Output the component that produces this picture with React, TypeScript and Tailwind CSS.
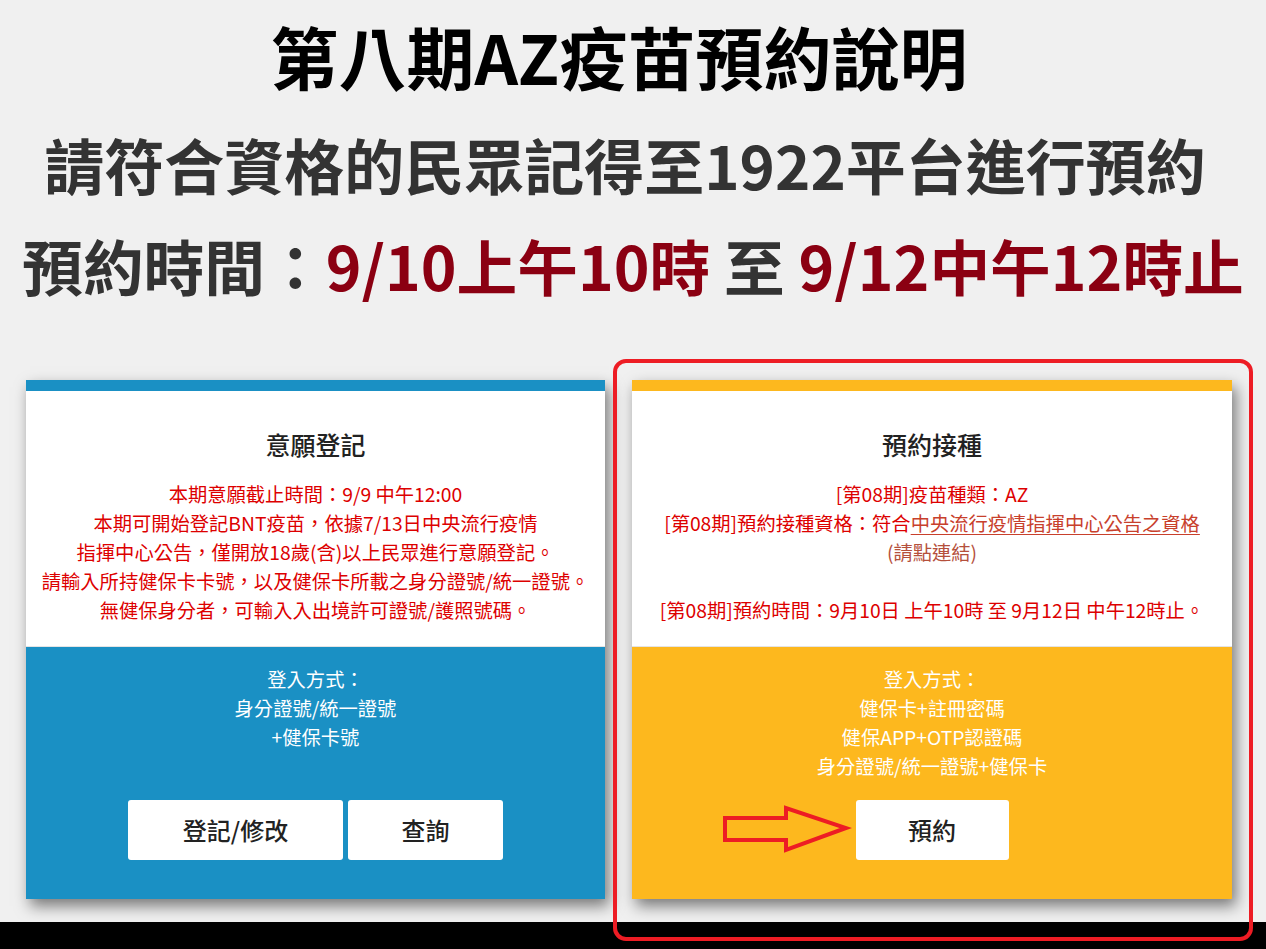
import React from 'react';

const font = "font-['Noto_Sans_CJK_TC','Noto_Sans',sans-serif]";

const RedArrow: React.FC = () => (
  <svg
    className="absolute left-[720px] top-[803px]"
    width="132"
    height="52"
    viewBox="0 0 132 52"
    fill="none"
  >
    <polygon
      points="5,15 66,15 66,5 126,25 66,47 66,37 5,37"
      stroke="#ed1c24"
      strokeWidth="4"
      strokeLinejoin="miter"
    />
  </svg>
);

const App: React.FC = () => {
  return (
    <div className={`relative h-[949px] w-[1266px] bg-[#f0f0f0] ${font} overflow-hidden`}>
      {/* headline */}
      <div className="pt-[6px] text-center whitespace-nowrap">
        <h1 className="pr-[28px] text-[68px] leading-[100px] font-bold text-black">第八期AZ疫苗預約說明</h1>
        <p className="mt-[8px] pr-[16px] text-[60px] leading-[100px] font-bold text-[#333]">
          請符合資格的民眾記得至1922平台進行預約
        </p>
        <p className="mt-[1px] text-[60.7px] leading-[100px] font-bold text-[#333]">
          預約時間：<span className="text-[#8b0012]">9/10上午10時</span> 至{' '}
          <span className="text-[#8b0012]">9/12中午12時止</span>
        </p>
      </div>

      {/* cards */}
      <div className="mt-[65px] flex gap-[27px] pl-[26px]">
        <div className="flex w-[579px] flex-col shadow-[4px_7px_14px_rgba(0,0,0,0.5)]">
          <div className="h-[11px] bg-[#1a90c4]" />
          <div className="h-[256px] border-b border-[#e4e4e4] bg-white pt-[38px] text-center">
            <h2 className="mb-[21px] text-[25px] leading-[30px] font-medium text-[#222]">意願登記</h2>
            <div className="text-[19.3px] leading-[29px] text-[#dd0000]">
              <p>本期意願截止時間：9/9 中午12:00</p>
              <p>本期可開始登記BNT疫苗，依據7/13日中央流行疫情</p>
              <p>指揮中心公告，僅開放18歲(含)以上民眾進行意願登記。</p>
              <p>請輸入所持健保卡卡號，以及健保卡所載之身分證號/統一證號。</p>
              <p>無健保身分者，可輸入入出境許可證號/護照號碼。</p>
            </div>
          </div>
          <div className="flex h-[252px] flex-col bg-[#1a90c4] pt-[18px] text-center">
            <div className="text-[19.3px] leading-[29px] text-white">
              <p>登入方式：</p>
              <p>身分證號/統一證號</p>
              <p>+健保卡號</p>
            </div>
            <div className="mt-auto mb-[39px] flex justify-center gap-[5px]">
              <button className="h-[60px] w-[215px] rounded-[3px] bg-white text-[24px] font-medium text-[#222]">
                登記/修改
              </button>
              <button className="h-[60px] w-[155px] rounded-[3px] bg-white text-[24px] font-medium text-[#222]">
                查詢
              </button>
            </div>
          </div>
        </div>

        <div className="flex w-[600px] flex-col shadow-[4px_7px_14px_rgba(0,0,0,0.5)]">
          <div className="h-[11px] bg-[#fdb81e]" />
          <div className="h-[256px] border-b border-[#e4e4e4] bg-white pt-[38px] text-center">
            <h2 className="mb-[21px] text-[25px] leading-[30px] font-medium text-[#222]">預約接種</h2>
            <div className="text-[19.3px] leading-[29px] text-[#dd0000]">
              <p>[第08期]疫苗種類：AZ</p>
              <p>
                [第08期]預約接種資格：符合
                <a className="text-[#c8402c] underline underline-offset-[3px]">中央流行疫情指揮中心公告之資格</a>
              </p>
              <p className="text-[#b5503c]">(請點連結)</p>
              <p>&nbsp;</p>
              <p>[第08期]預約時間：9月10日 上午10時 至 9月12日 中午12時止。</p>
            </div>
          </div>
          <div className="flex h-[252px] flex-col bg-[#fdb81e] pt-[18px] text-center">
            <div className="text-[19.3px] leading-[29px] text-white">
              <p>登入方式：</p>
              <p>健保卡+註冊密碼</p>
              <p>健保APP+OTP認證碼</p>
              <p>身分證號/統一證號+健保卡</p>
            </div>
            <div className="mt-auto mb-[39px] flex justify-center">
              <button className="h-[60px] w-[153px] rounded-[3px] bg-white text-[24px] font-medium text-[#222]">
                預約
              </button>
            </div>
          </div>
        </div>
      </div>

      <div className="mt-[23px] h-[40px] bg-black" />

      {/* annotations */}
      <RedArrow />
      <div className="pointer-events-none absolute left-[613px] top-[359px] h-[582px] w-[640px] rounded-[13px] border-4 border-[#ed1c24]" />
    </div>
  );
};

export default App;
